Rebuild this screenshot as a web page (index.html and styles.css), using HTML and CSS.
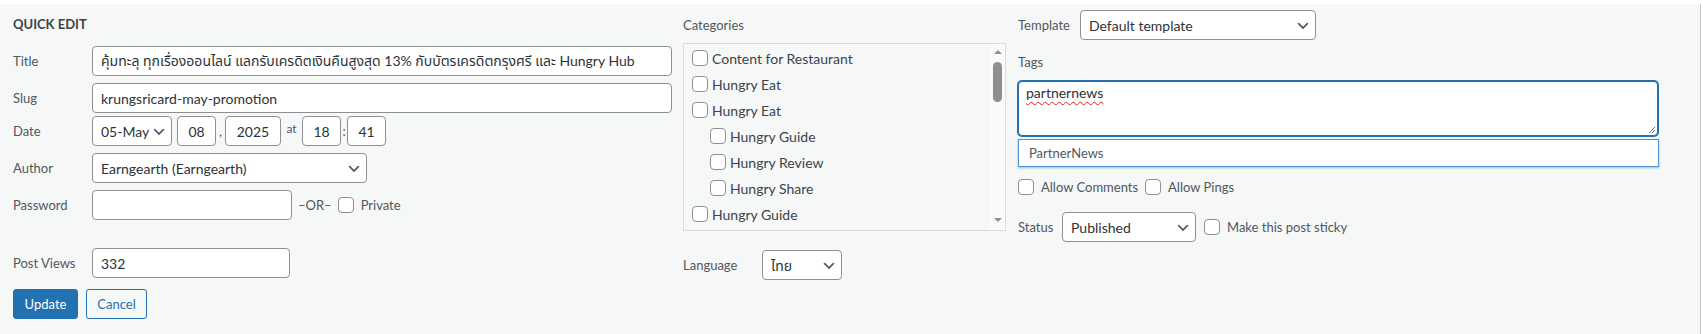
FILE: index.html
```html
<!doctype html>
<html>
<head>
<meta charset="utf-8">
<title>Quick Edit</title>
<link rel="stylesheet" href="styles.css">
</head>
<body>
<div class="quick-edit">
	<div class="col col-left">
		<h2 class="legend">Quick Edit</h2>
		<div class="row row-title">
			<span class="lbl">Title</span>
			<input class="field w-wide" type="text" value="คุ้มทะลุ ทุกเรื่องออนไลน์ แลกรับเครดิตเงินคืนสูงสุด 13% กับบัตรเครดิตกรุงศรี และ Hungry Hub">
		</div>
		<div class="row row-slug">
			<span class="lbl">Slug</span>
			<input class="field w-wide" type="text" value="krungsricard-may-promotion">
		</div>
		<div class="row row-date">
			<span class="lbl">Date</span>
			<span class="select w-month">
				<select class="field"><option>05-May</option></select>
				<svg class="chev" viewBox="0 0 20 20"><path d="M5 6l5 5 5-5 2 1-7 7-7-7 2-1z"/></svg>
			</span>
			<input class="field date-part w-day" type="text" value="08">
			<span class="sep sep-comma">,</span>
			<input class="field date-part w-year" type="text" value="2025">
			<span class="sep sep-at">at</span>
			<input class="field date-part w-day" type="text" value="18">
			<span class="sep sep-colon">:</span>
			<input class="field date-part w-day" type="text" value="41">
		</div>
		<div class="row row-author">
			<span class="lbl">Author</span>
			<span class="select w-author">
				<select class="field"><option>Earngearth (Earngearth)</option></select>
				<svg class="chev" viewBox="0 0 20 20"><path d="M5 6l5 5 5-5 2 1-7 7-7-7 2-1z"/></svg>
			</span>
		</div>
		<div class="row row-pass">
			<span class="lbl">Password</span>
			<input class="field w-pass" type="text" value="">
			<span class="or">&ndash;OR&ndash;</span>
			<label class="check check-private"><input class="cb" type="checkbox">Private</label>
		</div>
		<div class="row row-views">
			<span class="lbl">Post Views</span>
			<input class="field w-views" type="text" value="332">
		</div>
		<div class="row row-buttons">
			<button class="btn btn-primary">Update</button>
			<button class="btn btn-secondary">Cancel</button>
		</div>
	</div>

	<div class="col col-mid">
		<div class="mid-label">Categories</div>
		<div class="cat-box">
			<ul class="cat-list">
				<li class="cat-item"><input class="cb" type="checkbox">Content for Restaurant</li>
				<li class="cat-item"><input class="cb" type="checkbox">Hungry Eat</li>
				<li class="cat-item"><input class="cb" type="checkbox">Hungry Eat</li>
				<li class="cat-item child"><input class="cb" type="checkbox">Hungry Guide</li>
				<li class="cat-item child"><input class="cb" type="checkbox">Hungry Review</li>
				<li class="cat-item child"><input class="cb" type="checkbox">Hungry Share</li>
				<li class="cat-item"><input class="cb" type="checkbox">Hungry Guide</li>
			</ul>
			<div class="scrollbar">
				<span class="arrow-up"></span>
				<span class="thumb"></span>
				<span class="arrow-down"></span>
			</div>
		</div>
		<div class="row row-lang">
			<span class="lbl">Language</span>
			<span class="select w-lang">
				<select class="field"><option>ไทย</option></select>
				<svg class="chev" viewBox="0 0 20 20"><path d="M5 6l5 5 5-5 2 1-7 7-7-7 2-1z"/></svg>
			</span>
		</div>
	</div>

	<div class="col col-right">
		<div class="row row-template">
			<span class="lbl lbl-template">Template</span>
			<span class="select w-template">
				<select class="field"><option>Default template</option></select>
				<svg class="chev" viewBox="0 0 20 20"><path d="M5 6l5 5 5-5 2 1-7 7-7-7 2-1z"/></svg>
			</span>
		</div>
		<div class="tags-label">Tags</div>
		<div class="tags-box">
			<span class="misspelled">partnernews</span>
			<svg class="grip" viewBox="0 0 10 10"><path d="M9 3L3 9M9 6L6 9" stroke="#757575" stroke-width="1"/></svg>
		</div>
		<div class="suggest">PartnerNews</div>
		<div class="row row-allow">
			<label class="check"><input class="cb" type="checkbox">Allow Comments</label>
			<label class="check check-pings"><input class="cb" type="checkbox">Allow Pings</label>
		</div>
		<div class="row row-status">
			<span class="lbl lbl-status">Status</span>
			<span class="select w-status">
				<select class="field"><option>Published</option></select>
				<svg class="chev" viewBox="0 0 20 20"><path d="M5 6l5 5 5-5 2 1-7 7-7-7 2-1z"/></svg>
			</span>
			<label class="check check-sticky"><input class="cb" type="checkbox">Make this post sticky</label>
		</div>
	</div>
</div>
</body>
</html>
```

FILE: styles.css
```css
body{
	margin: 0;
	background: #fff;
	font-family: Lato, "Noto Sans", "Noto Sans Thai", "Noto Sans Thai UI", sans-serif;
	font-size: 13px;
	color: #50575e;
}
.quick-edit{
	margin-top: 4px;
	width: 1700px;
	height: 330px;
	background: #f6f7f7;
	border-right: 1px solid #c3c4c7;
	display: flex;
}
.col-left{
	width: 659px;
	padding-left: 13px;
}
.col-mid{
	width: 323px;
	margin-left: 11px;
}
.col-right{
	width: 641px;
	margin-left: 12px;
}

/* left column */
.legend{
	margin: 12px 0 0;
	font-size: 13px;
	line-height: 16px;
	font-weight: 700;
	color: #3c434a;
	text-transform: uppercase;
}
.row{
	display: flex;
	align-items: center;
	height: 30px;
}
.lbl{
	width: 79px;
	flex: none;
}
.row-title{ margin-top: 14px; }
.row-slug{ margin-top: 7px; }
.row-date{ margin-top: 3px; }
.row-author{ margin-top: 7px; }
.row-pass{ margin-top: 7px; }
.row-views{ margin-top: 28px; }
.row-buttons{ margin-top: 11px; }

.field{
	box-sizing: border-box;
	height: 30px;
	margin: 0;
	padding: 0 8px;
	border: 1px solid #8c8f94;
	border-radius: 4px;
	background: #fff;
	font-family: inherit;
	font-size: 14px;
	color: #2c3338;
	outline: none;
}
.w-wide{ width: 580px; }
.w-pass{ width: 200px; }
.w-views{ width: 198px; }
.date-part{
	padding: 0;
	text-align: center;
}
.w-day{ width: 39px; }
.w-year{ width: 56px; }
.w-month{ width: 80px; margin-right: 5px; }
.sep{
	text-align: center;
	color: #50575e;
}
.sep-comma{ width: 9px; align-self: flex-end; margin-bottom: 7px; }
.sep-at{ width: 21px; font-size: 12px; margin-bottom: 6px; }
.sep-colon{ width: 6px; }

.select{
	position: relative;
	display: inline-block;
	height: 30px;
	flex: none;
}
.select select{
	width: 100%;
	appearance: none;
	-webkit-appearance: none;
	padding-right: 24px;
}
.w-month select{
	padding-right: 4px;
}
.chev{
	position: absolute;
	right: 5px;
	top: 8px;
	width: 16px;
	height: 16px;
	fill: #50575e;
	pointer-events: none;
}
.w-author{ width: 275px; }
.w-lang{ width: 80px; }
.w-template{ width: 236px; }
.w-status{ width: 134px; }

.or{
	margin-left: 6px;
}
.check{
	display: flex;
	align-items: center;
	gap: 7px;
}
.check-private{ margin-left: 6px; }
.cb{
	appearance: none;
	-webkit-appearance: none;
	box-sizing: border-box;
	width: 16px;
	height: 16px;
	margin: 0;
	border: 1px solid #8c8f94;
	border-radius: 4px;
	background: #fff;
	flex: none;
}

.btn{
	box-sizing: border-box;
	height: 30px;
	padding: 0;
	border-radius: 3px;
	font-family: inherit;
	font-size: 13px;
	cursor: pointer;
}
.btn-primary{
	width: 65px;
	background: #2271b1;
	border: 1px solid #2271b1;
	color: #fff;
}
.btn-secondary{
	width: 61px;
	margin-left: 8px;
	background: #f6f7f7;
	border: 1px solid #2271b1;
	color: #2271b1;
}

/* categories */
.mid-label{
	margin-top: 11px;
	line-height: 20px;
}
.cat-box{
	margin-top: 8px;
	height: 188px;
	box-sizing: border-box;
	border: 1px solid #dcdcde;
	display: flex;
}
.cat-list{
	flex: 1;
	margin: 0;
	padding: 1px 0 0 8px;
	list-style: none;
	overflow: hidden;
}
.cat-item{
	display: flex;
	align-items: center;
	gap: 4px;
	height: 26px;
	font-size: 14px;
	color: #3c434a;
}
.cat-item.child{
	padding-left: 18px;
}
.scrollbar{
	width: 15px;
	background: #fafafa;
	display: flex;
	flex-direction: column;
	align-items: center;
}
.arrow-up{
	margin-top: 6px;
	border-left: 4px solid transparent;
	border-right: 4px solid transparent;
	border-bottom: 4px solid #8f8f8f;
}
.thumb{
	margin-top: 8px;
	width: 9px;
	height: 40px;
	border-radius: 5px;
	background: #8f8f8f;
}
.arrow-down{
	margin-top: auto;
	margin-bottom: 8px;
	border-left: 4px solid transparent;
	border-right: 4px solid transparent;
	border-top: 4px solid #8f8f8f;
}
.row-lang{ margin-top: 19px; }

/* right column */
.row-template{ margin-top: 6px; }
.lbl-template{ width: 62px; }
.tags-label{
	margin-top: 12px;
	line-height: 20px;
}
.tags-box{
	position: relative;
	box-sizing: border-box;
	margin-top: 9px;
	width: 640px;
	height: 55px;
	padding: 1px 7px;
	border: 1px solid #2271b1;
	border-radius: 4px;
	box-shadow: 0 0 0 1px #2271b1;
	background: #fff;
	font-size: 14px;
	line-height: 20px;
	color: #2c3338;
}
.misspelled{
	text-decoration: underline wavy #e02020;
	text-decoration-thickness: 1px;
	text-underline-offset: 3px;
}
.grip{
	position: absolute;
	right: 1px;
	bottom: 1px;
	width: 10px;
	height: 10px;
}
.suggest{
	box-sizing: border-box;
	margin-top: 3px;
	width: 641px;
	height: 28px;
	padding-left: 10px;
	border: 1px solid #4f94d4;
	box-shadow: 0 1px 2px rgba(79, 148, 212, 0.6);
	background: #fff;
	line-height: 26px;
	color: #50575e;
}
.row-allow{
	margin-top: 10px;
	height: 20px;
}
.check-pings{ margin-left: 7px; }
.row-status{ margin-top: 15px; }
.lbl-status{ width: 44px; }
.check-sticky{ margin-left: 8px; }
```
